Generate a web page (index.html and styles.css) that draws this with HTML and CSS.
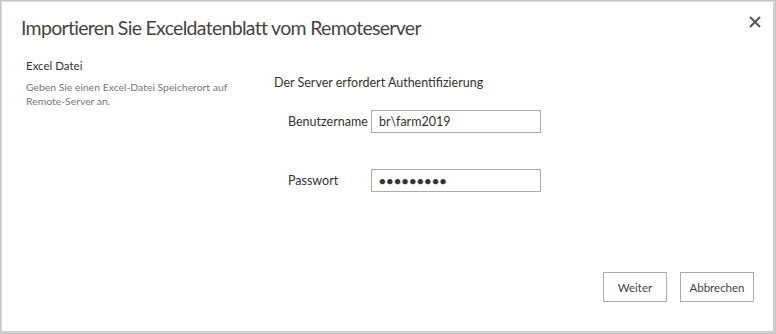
FILE: index.html
```html
<!DOCTYPE html>
<html lang="de">
<head>
<meta charset="utf-8">
<link rel="stylesheet" href="styles.css">
</head>
<body>
<div class="dialog">
  <div class="header">
    <h1 class="title">Importieren Sie Exceldatenblatt vom Remoteserver</h1>
    <button class="close" aria-label="Schließen">
      <svg width="12" height="12" viewBox="0 0 12 12"><path d="M1 1L11 11M11 1L1 11" stroke="#555" stroke-width="2" fill="none"/></svg>
    </button>
  </div>
  <div class="body">
    <div class="side">
      <div class="side-title">Excel Datei</div>
      <div class="side-desc">Geben Sie einen Excel-Datei Speicherort auf Remote-Server an.</div>
    </div>
    <div class="main">
      <div class="auth">Der Server erfordert Authentifizierung</div>
      <div class="row row-user">
        <label class="lbl">Benutzername</label>
        <div class="input">br\farm2019</div>
      </div>
      <div class="row row-pass">
        <label class="lbl">Passwort</label>
        <div class="input dots">●●●●●●●●●</div>
      </div>
    </div>
  </div>
  <div class="footer">
    <button class="btn btn-next">Weiter</button>
    <button class="btn btn-cancel">Abbrechen</button>
  </div>
</div>
</body>
</html>
```
FILE: styles.css
```css
html, body {
  margin: 0;
  padding: 0;
  background: #fff;
}
body {
  font-family: Lato, "Open Sans", sans-serif;
  color: #333;
}
.dialog {
  box-sizing: border-box;
  width: 776px;
  height: 334px;
  border: 1px solid #c8c8c8;
  box-shadow: inset 1px 1px 0 #d8d8d8, inset -2px -2px 0 #cfcfcf;
  display: flex;
  flex-direction: column;
  position: relative;
}
.header {
  display: flex;
  justify-content: space-between;
  align-items: flex-start;
  padding: 12px 14px 0 20px;
}
.title {
  margin: 0;
  font-weight: normal;
  font-size: 19.5px;
  letter-spacing: -0.7px;
  line-height: 30px;
  color: #444;
}
.close {
  border: 0;
  background: none;
  padding: 0;
  margin-top: 3px;
  width: 12px;
  height: 12px;
  display: flex;
}
.body {
  display: flex;
  padding-top: 15px;
  flex: 1;
}
.side {
  width: 273px;
  padding-left: 25px;
  box-sizing: border-box;
}
.side-title {
  font-size: 11.5px;
  line-height: 16px;
  color: #333;
}
.side-desc {
  margin-top: 6px;
  font-size: 10.4px;
  line-height: 14px;
  color: #777;
  width: 210px;
}
.main {
  padding-top: 16px;
}
.auth {
  font-size: 12.5px;
  line-height: 18px;
  color: #333;
}
.row {
  display: flex;
  align-items: center;
  padding-left: 14px;
}
.row-user {
  margin-top: 18px;
}
.row-pass {
  margin-top: 36px;
}
.lbl {
  width: 83px;
  font-size: 12.5px;
  color: #333;
}
.input {
  box-sizing: border-box;
  width: 170px;
  height: 23px;
  border: 1px solid #ababab;
  font-size: 12.5px;
  line-height: 21px;
  padding-left: 7px;
  color: #333;
}
.dots {
  font-size: 11px;
  letter-spacing: 1px;
  color: #333;
}
.footer {
  display: flex;
  justify-content: flex-end;
  gap: 13px;
  padding: 0 21px 31px 0;
}
.btn {
  box-sizing: border-box;
  height: 30px;
  border: 1px solid #ababab;
  background: #fff;
  font-family: Lato, "Open Sans", sans-serif;
  font-size: 11.5px;
  color: #444;
  padding: 0;
}
.btn-next {
  width: 64px;
}
.btn-cancel {
  width: 74px;
}
```
